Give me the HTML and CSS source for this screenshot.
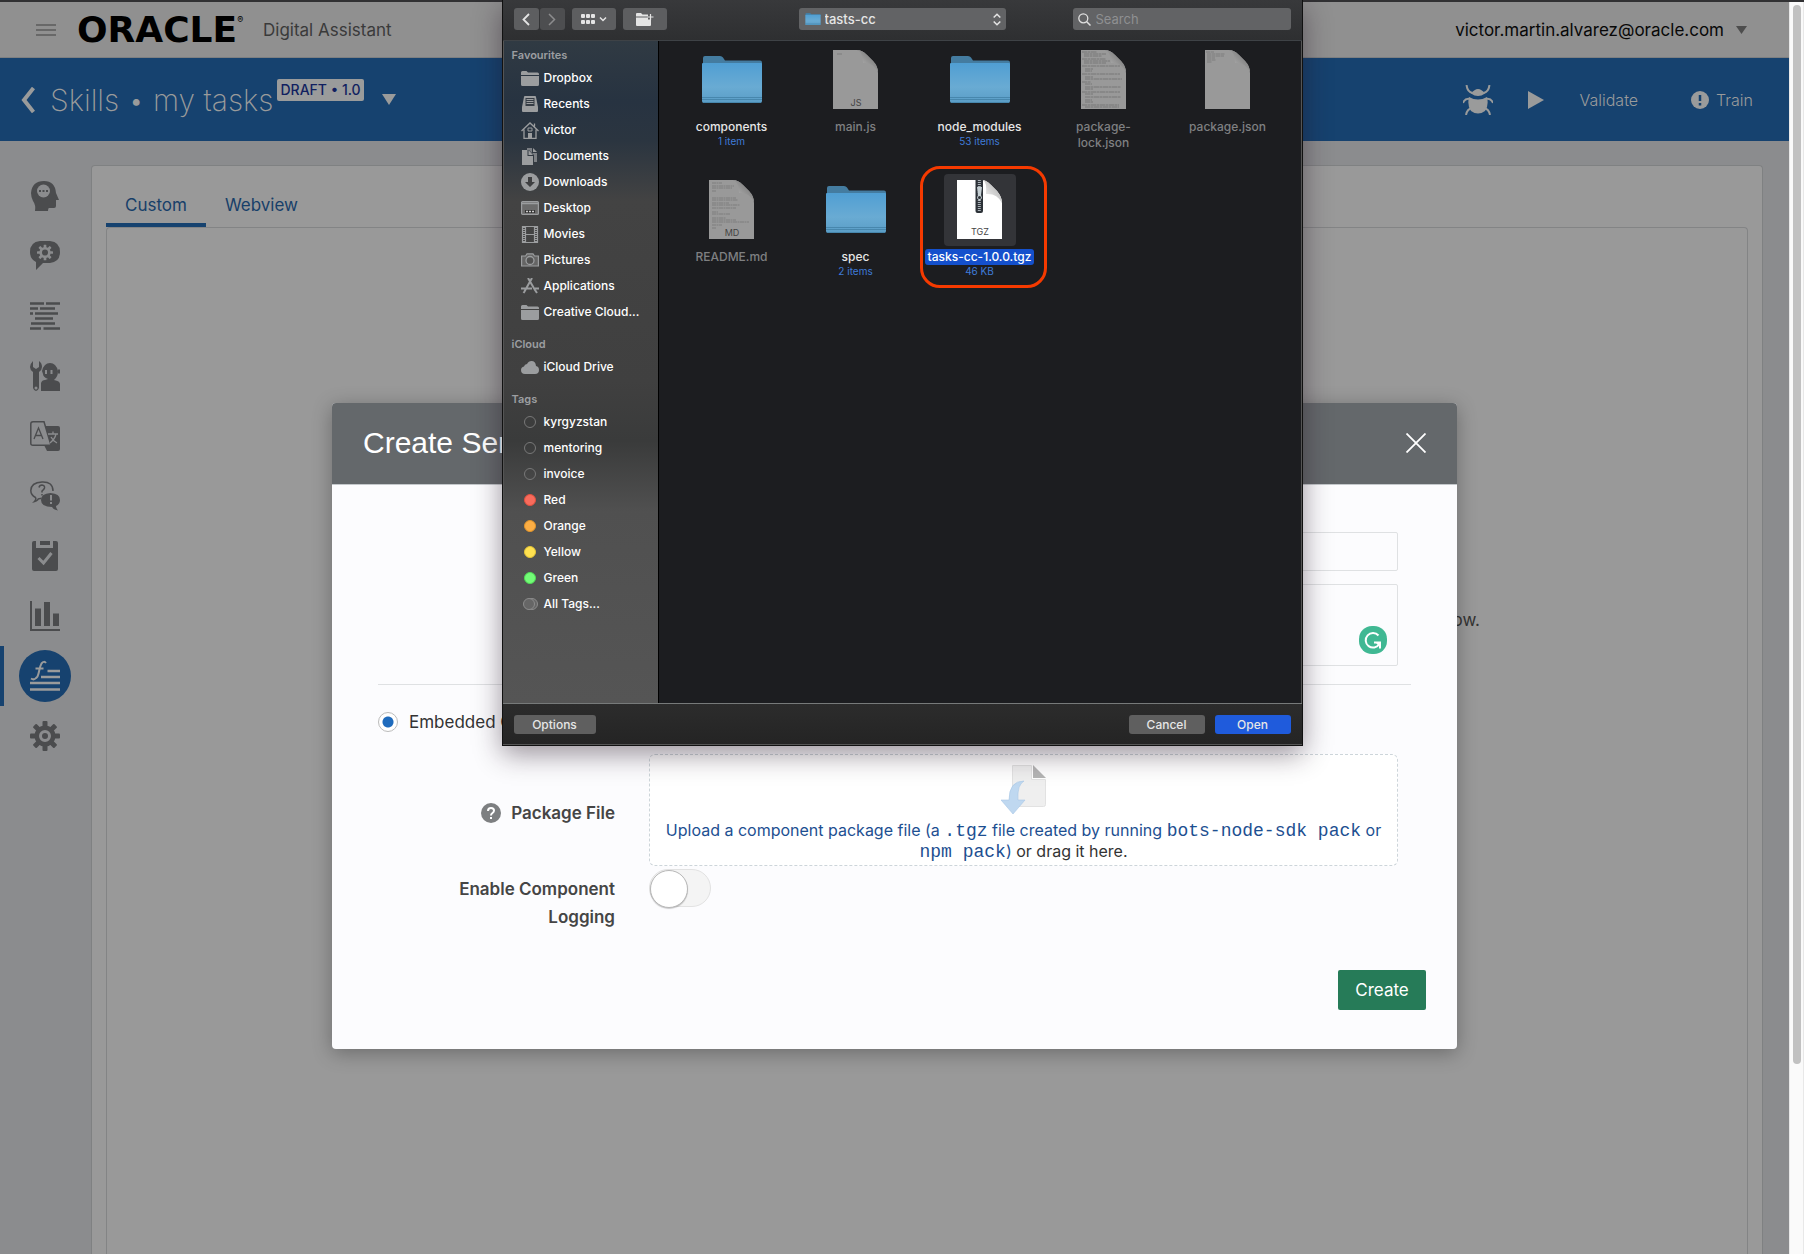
FILE: index.html
```html
<!DOCTYPE html>
<html lang="en">
<head>
<meta charset="utf-8">
<title>Oracle Digital Assistant</title>
<link rel="stylesheet" href="styles.css">
</head>
<body>
<svg class="sprite" aria-hidden="true">
  <defs>
    <linearGradient id="folder-fill" x1="0" y1="0" x2="0" y2="1">
      <stop offset="0" stop-color="#509fd3"/><stop offset="0.6" stop-color="#69abd3"/><stop offset="1" stop-color="#5a9dc6"/>
    </linearGradient>
    <linearGradient id="fold-fill" x1="0" y1="1" x2="1" y2="0">
      <stop offset="0" stop-color="#c2c2c2"/><stop offset="0.6" stop-color="#8b8b8b"/>
    </linearGradient>
    <linearGradient id="fold-white" x1="0" y1="1" x2="1" y2="0">
      <stop offset="0" stop-color="#fff"/><stop offset="0.6" stop-color="#c8c8c8"/>
    </linearGradient>
    <symbol id="folder" viewBox="0 0 60 47">
      <path d="M1 2q0-2 2-2h15q2 0 3 1.500l2 3h35q2 0 2 2V12H1z" fill="#447ca0"/>
      <path d="M0 8q0-1 1-1h58q1 0 1 1v37q0 2-2 2H2q-2 0-2-2z" fill="url(#folder-fill)"/>
      <path d="M0 41.500h60M0 43.500h60M1 46.500h58" stroke="#4787ad" stroke-width="1"/>
    </symbol>
    <symbol id="sheet" viewBox="0 0 45 59">
      <path d="M0 0h24q5 0 10 5l6 6q5 6 5 12v36H0z" fill="#999"/>
      <path d="M24 0q6 2 6 13q10-1 15 9q0-6-5-11l-6-6q-5-5-10-5z" fill="url(#fold-fill)"/>
    </symbol>
    <symbol id="mini-folder" viewBox="0 0 18 15">
      <path d="M0 1.500Q0 0 1.500 0h4L7 1.500h9.500Q18 1.500 18 3v1H0zM0 5h18v8.500q0 1.500-1.500 1.500h-15Q0 15 0 13.500z" fill="currentColor"/>
    </symbol>
    <symbol id="gear" viewBox="0 0 30 30">
      <g fill="currentColor">
        <g id="teeth"><rect x="12.500" y="0" width="5" height="30" rx="1"/><rect x="0" y="12.500" width="30" height="5" rx="1"/></g>
        <use href="#teeth" transform="rotate(45 15 15)"/>
        <circle cx="15" cy="15" r="10.500"/>
      </g>
    </symbol>
  </defs>
</svg>

<div class="page">
  <div class="app">
    <header class="topbar">
      <button class="menu-button" aria-label="Menu"><svg width="20" height="12" viewBox="0 0 20 12"><path d="M0 1h20M0 6h20M0 11h20" stroke="#5b5b5b" stroke-width="1.500"/></svg></button>
      <a class="brand" href="#"><span class="wordmark">ORACLE</span><sup>®</sup></a>
      <span class="product">Digital Assistant</span>
      <button class="account">victor.martin.alvarez@oracle.com<svg width="11" height="8" viewBox="0 0 11 8"><path d="M0 0h11L5.500 8z" fill="#4d4d4d"/></svg></button>
    </header>

    <div class="skillbar">
      <a class="back" href="#" aria-label="Back"><svg width="14" height="26" viewBox="0 0 14 26"><path d="M12.500 1L3 13l9.500 12" fill="none" stroke="#9a9b9b" stroke-width="4"/></svg></a>
      <h1>Skills • my tasks</h1>
      <span class="version">DRAFT • 1.0</span>
      <button class="version-menu" aria-label="Versions"><svg width="14" height="11" viewBox="0 0 14 11"><path d="M0 0h14L7 11z" fill="#9a9b9b"/></svg></button>
      <div class="skill-actions">
        <button aria-label="Debug"><svg width="30" height="30" viewBox="0 0 30 30" fill="none" stroke="#9a9b9b" stroke-width="2"><path d="M3.500 0q1 7 6 8M26.500 0q-1 7-6 8M0 18q2-5 7-4M30 18q-2-5-7-4M3 30q1-6 6-7M27 30q-1-6-6-7"/><path d="M8 8.500q7-9 14 0q-7 5-14 0zM6 12q9 5 18 0q2 9-2 14q-7 5-14 0q-4-5-2-14z" fill="#9a9b9b" stroke="none"/></svg></button>
        <button class="play" aria-label="Run"><svg width="16" height="18" viewBox="0 0 16 18"><path d="M0 0l16 9L0 18z" fill="#9a9b9b"/></svg></button>
        <button class="validate">Validate</button>
        <button class="train"><svg width="18" height="18" viewBox="0 0 18 18"><circle cx="9" cy="9" r="9" fill="#9a9b9b"/><path d="M9 4v6M9 12v2.500" stroke="#16426f" stroke-width="2.500"/></svg>Train</button>
      </div>
    </div>

    <div class="workspace">
      <nav class="rail">
        <a href="#" aria-label="Intents"><svg width="30" height="30" viewBox="0 0 30 30"><path d="M5 30q1-6-2-10Q1 16 1 12Q2 0 14 0q11 0 12 12l3 7h-3v6q0 2-2 2h-5q-1 0-1 3z" fill="#4b4c4e"/><circle cx="13.500" cy="10" r="6.500" fill="#8b8c8e"/><path d="M9 10h2M12.500 10h2M16 10h2" stroke="#4b4c4e" stroke-width="2"/></svg></a>
        <a href="#" aria-label="Q&amp;A"><svg width="30" height="30" viewBox="0 0 30 30"><path d="M10 0h10q10 1 10 11t-10 11h-7l-7 7v-8Q0 18 0 11Q0 1 10 0z" fill="#4b4c4e"/><g color="#8b8c8e"><use href="#gear" x="7" y="3.500" width="16" height="16"/></g><circle cx="15" cy="11.500" r="3" fill="#4b4c4e"/></svg></a>
        <a href="#" aria-label="Flows"><svg width="30" height="30" viewBox="0 0 30 30"><path d="M0 2.500h14M16 2.500h14M0 7.500h8M10 7.500h15M0 12.500h3M5 12.500h23M5 17.500h18M1 22.500h24M0 27.500h11M13.500 27.500H30" stroke="#4b4c4e" stroke-width="2.500"/></svg></a>
        <a href="#" aria-label="Tools"><svg width="30" height="30" viewBox="0 0 30 30"><path d="M3 0v6l3 2 3-2V0q3 2 3 6q0 3-3 5v16q-1 3-3 3t-3-3V11Q0 9 0 6t3-6z" fill="#4b4c4e"/><circle cx="6" cy="27" r="1.500" fill="#8b8c8e"/><path d="M11 30V22q1-3 4-3l3-1q-5-2-5-5l-1-3q2-8 8-8t8 8q0 6-4 9q6 1 6 4v7z" fill="#4b4c4e"/><path d="M16 9v4M21.500 9v4" stroke="#8b8c8e" stroke-width="2"/><path d="M29 8.500v4" stroke="#4b4c4e" stroke-width="2"/></svg></a>
        <a href="#" aria-label="Translate"><svg width="30" height="30" viewBox="0 0 30 30"><path d="M14 5h14q2 0 2 2v21q0 2-2 2H17l-3-6z" fill="#4b4c4e"/><path d="M3 .8h11L21 24.200H3q-2.200 0-2.200-2V3Q.8.800 3 .8z" fill="#8b8c8e" stroke="#4b4c4e" stroke-width="1.500"/><path d="M4 18L8.500 7 13 18M5.500 14.500h6" fill="none" stroke="#4b4c4e" stroke-width="1.300"/><path d="M18 13h10M23 10.500v2.500M26 13q-1 5-6 9M21 16q2 4 6 6" fill="none" stroke="#8b8c8e" stroke-width="1.300"/></svg></a>
        <a href="#" aria-label="Feedback"><svg width="30" height="30" viewBox="0 0 30 30"><path d="M11.500 17.500Q8 17 7.500 19q-1 1-3 1.500 2-2 1-4Q.8 14 .8 9.500Q1 1.500 12 1t11 9" fill="none" stroke="#4b4c4e" stroke-width="1.500"/><path d="M20.500 12Q30 12.500 30 19q0 4-4 6 0 2 2 4.500-5-1-6-3.500Q11 26 11 19q0-6.500 9.500-7z" fill="#4b4c4e"/><path d="M9 6.500Q9.500 4 12 4q3 .5 2.500 3-.5 1.500-2.500 3v1.500M12 13v1.500" fill="none" stroke="#4b4c4e" stroke-width="1.500"/><path d="M21 14v5.500M21 21v2" stroke="#8b8c8e" stroke-width="2"/></svg></a>
        <a href="#" aria-label="Test"><svg width="30" height="30" viewBox="0 0 30 30"><path d="M4 0h2v7h17V0h3q2 0 2 2v26q0 2-2 2H4q-2 0-2-2V2q0-2 2-2z" fill="#4b4c4e"/><path d="M10 0h10v4H10z" fill="#4b4c4e"/><path d="M8.500 17l5 5 8-10" fill="none" stroke="#8b8c8e" stroke-width="3"/></svg></a>
        <a href="#" aria-label="Insights"><svg width="30" height="30" viewBox="0 0 30 30"><path d="M1 0v29h29" fill="none" stroke="#4b4c4e" stroke-width="2"/><path d="M5 7.500h6V25H5zM14 1h6v24h-6zM23 12.500h6V25h-6z" fill="#4b4c4e"/></svg></a>
        <a href="#" class="active" aria-label="Components"><svg width="52" height="52" viewBox="0 0 52 52"><circle cx="26" cy="26" r="26" fill="#16426f"/><path d="M28.500 21H41M22 27h19M11 33h30M11 39.500h30" stroke="#9a9b9b" stroke-width="2.500"/><path d="M27 13q-2-2.500-4.500.5Q21 16 20 21.500T17 28q-2 2.500-5 .5M16.500 18.500h8" fill="none" stroke="#9a9b9b" stroke-width="2"/></svg></a>
        <a href="#" aria-label="Settings"><svg width="30" height="30" viewBox="0 0 30 30"><g color="#4b4c4e"><use href="#gear" width="30" height="30"/></g><circle cx="15" cy="15" r="4.500" fill="none" stroke="#8b8c8e" stroke-width="3"/></svg></a>
      </nav>
      <main class="card">
        <div class="tabs">
          <a class="tab selected" href="#">Custom</a>
          <a class="tab" href="#">Webview</a>
        </div>
        <div class="panel"><p>To create a service, use the button below.</p></div>
      </main>
    </div>
  </div>
  <div class="scrollbar"><div class="thumb"></div></div>

  <section class="modal" aria-label="Create Service">
    <header class="modal-head">
      <h2>Create Service</h2>
      <button class="close" aria-label="Close"><svg width="20" height="20" viewBox="0 0 20 20"><path d="M.5.500l19 19M19.500.500l-19 19" stroke="#fff" stroke-width="1.800"/></svg></button>
    </header>
    <form class="modal-body">
      <div class="row"><input class="field" type="text" aria-label="Name"></div>
      <div class="row area">
        <textarea class="field tall" aria-label="Description"></textarea>
        <svg class="checker" width="28" height="28" viewBox="0 0 28 28"><rect width="28" height="28" rx="13" fill="#40b893"/><path d="M19.500 9.500a7.300 7.300 0 1 0 .8 8.500" fill="none" stroke="#fff" stroke-width="2"/><path d="M15 16.500h6v6" fill="none" stroke="#fff" stroke-width="2"/><path d="M17 17h4v4z" fill="#fff"/></svg>
      </div>
      <hr>
      <label class="choice"><input type="radio" name="kind" checked>Embedded Container</label>
      <div class="row">
        <label class="caption" for="package"><svg width="20" height="20" viewBox="0 0 20 20"><circle cx="10" cy="10" r="10" fill="#7d7f81"/><path d="M7 8q0-3 3-3t3 2.500q0 1.500-1.500 2.500T10 12.500M10 14v2" fill="none" stroke="#fff" stroke-width="2"/></svg>Package File</label>
        <div class="dropzone" id="package">
          <svg width="46" height="49" viewBox="0 0 46 49"><path d="M11.500.500h19v14h14v25q0 2-2 2h-29q-2 0-2-2z" fill="#efefef" stroke="#e2e2e2"/><path d="M32 0l13 13H32z" fill="#b5b5b5"/><path d="M23 16Q8 16 8 35H0l12 14 12-14h-7Q16 20 23 16z" fill="#bfd8f0" stroke="#a9c8e6" stroke-width=".6"/></svg>
          <p><a href="#">Upload a component package file (a <code>.tgz</code> file created by running <code>bots-node-sdk pack</code> or <code>npm pack</code>)</a> or drag it here.</p>
        </div>
      </div>
      <div class="row logging">
        <label class="caption" for="logging">Enable Component Logging</label>
        <input class="toggle" id="logging" type="checkbox">
      </div>
      <div class="submit"><button type="button">Create</button></div>
    </form>
  </section>

  <section class="finder" aria-label="Open file">
    <header class="toolbar">
      <div class="history">
        <button aria-label="Back"><svg width="8" height="13" viewBox="0 0 8 13"><path d="M7 1L1.500 6.500 7 12" fill="none" stroke="#e4e4e4" stroke-width="1.800"/></svg></button>
        <button aria-label="Forward"><svg width="8" height="13" viewBox="0 0 8 13"><path d="M1 1l5.500 5.500L1 12" fill="none" stroke="#8c8c8d" stroke-width="1.500"/></svg></button>
      </div>
      <button class="wide" aria-label="View"><svg width="26" height="11" viewBox="0 0 26 11"><g fill="#e4e4e4"><rect width="4" height="4" rx="1"/><rect x="5" width="4" height="4" rx="1"/><rect x="10" width="4" height="4" rx="1"/><rect y="6" width="4" height="4" rx="1"/><rect x="5" y="6" width="4" height="4" rx="1"/><rect x="10" y="6" width="4" height="4" rx="1"/></g><path d="M19 3.500L22 6.500 25 3.500" fill="none" stroke="#e4e4e4" stroke-width="1.500"/></svg></button>
      <button class="wide" aria-label="New folder"><svg width="18" height="13" viewBox="0 0 18 13"><path d="M0 1q0-1 1-1h4l1.500 1.500H12v2H0zM0 4.500h12v2h3V12q0 1-1 1H1q-1 0-1-1z" fill="#e4e4e4"/><path d="M14.500 1v6M11.500 4h6" stroke="#e4e4e4" stroke-width="1.200"/></svg></button>
      <div class="location">
        <svg class="location-folder" width="16" height="12"><use href="#folder" width="16" height="12"/></svg>
        <select aria-label="Folder"><option>tasts-cc</option></select>
        <svg class="stepper" width="8" height="13" viewBox="0 0 8 13"><path d="M.7 4.500L4 1.200l3.300 3.300M.7 8.500L4 11.800l3.300-3.300" fill="none" stroke="#e4e4e4" stroke-width="1.500"/></svg>
      </div>
      <div class="search">
        <svg width="13" height="13" viewBox="0 0 13 13"><circle cx="5.300" cy="5.300" r="4.500" fill="none" stroke="#e0e0e0" stroke-width="1.300"/><path d="M8.500 8.500l4 4" stroke="#e0e0e0" stroke-width="1.500"/></svg>
        <input type="search" placeholder="Search" aria-label="Search">
      </div>
    </header>

    <div class="browser">
      <nav class="places">
        <h3>Favourites</h3>
        <a href="#"><svg width="18" height="15"><use href="#mini-folder"/></svg>Dropbox</a>
        <a href="#"><svg width="18" height="16" viewBox="0 0 18 16"><path d="M3 1q0-1 1-1h10q1 0 1 1l2 10v4q0 1-1 1H2q-1 0-1-1v-4z" fill="currentColor"/><path d="M4.500 2h9v8h-9z" fill="#353c45"/><path d="M5.500 3.500h7M5.500 5.500h7M5.500 7.500h7M2.500 11.500h3l1 2h5l1-2h3" fill="none" stroke="currentColor"/></svg>Recents</a>
        <a href="#"><svg width="18" height="17" viewBox="0 0 18 17"><path d="M.5 9L9 1l8.500 8M3 7.500v9h12v-9M13.500 1.500v3" fill="none" stroke="currentColor" stroke-width="1.300"/><path d="M7 6h4v3H7z" fill="none" stroke="currentColor"/><path d="M7 11h4v5H7z" fill="currentColor"/></svg>victor</a>
        <a href="#"><svg width="18" height="17" viewBox="0 0 18 17"><path d="M6 0h5v5h5v9h-3V7L8 2H6z" fill="currentColor" opacity=".7"/><path d="M1 2h5.500v6H12v9H1zM7.500 2L12 7H7.500zM12 0l4 4h-4z" fill="currentColor"/></svg>Documents</a>
        <a href="#"><svg width="18" height="18" viewBox="0 0 18 18"><circle cx="9" cy="9" r="9" fill="currentColor"/><path d="M7 4h4v5h3l-5 5-5-5h3z" fill="#3e3f41"/></svg>Downloads</a>
        <a href="#"><svg width="18" height="14" viewBox="0 0 18 14"><rect x=".6" y=".6" width="16.800" height="12.800" rx="1" fill="#6b6b6b" stroke="currentColor" stroke-width="1.200"/><path d="M1 2.500h16" stroke="currentColor" stroke-width="1.500"/><path d="M4 9h10v3H4z" fill="#333"/><path d="M5 10.500h2M8 10.500h2M11 10.500h2" stroke="#ccc" stroke-width="1.500"/></svg>Desktop</a>
        <a href="#"><svg width="18" height="17" viewBox="0 0 18 17"><path d="M1.500.500h15v16h-15zM4.500 0v17M13.500 0v17M4.500 8.500h9" fill="none" stroke="currentColor" stroke-width="1.200"/><path d="M3 1v15M15 1v15" stroke="currentColor" stroke-width="2" stroke-dasharray="1 1"/></svg>Movies</a>
        <a href="#"><svg width="18" height="14" viewBox="0 0 18 14"><path d="M.6 3h4L6 .8h6L13.500 3h3.900v10H.6z" fill="#656565" stroke="currentColor" stroke-width="1.200"/><circle cx="9" cy="7.500" r="4" fill="#525252" stroke="currentColor" stroke-width="1.300"/></svg>Pictures</a>
        <a href="#"><svg width="18" height="16" viewBox="0 0 18 16"><path d="M7 0l7 12 2 3M11 0L3.500 13.500 2.500 15M0 10.500h11M14 10.500h4" fill="none" stroke="currentColor" stroke-width="2"/></svg>Applications</a>
        <a href="#"><svg width="18" height="15"><use href="#mini-folder"/></svg>Creative Cloud...</a>
        <h3>iCloud</h3>
        <a href="#"><svg width="18" height="13" viewBox="0 0 18 13"><path d="M4 13q-4 0-4-4 0-3 3-3.500Q3.500 3 6 3q1.500-3 4.500-3 4 0 4.500 5 3 .5 3 4 0 4-4 4z" fill="currentColor"/></svg>iCloud Drive</a>
        <h3>Tags</h3>
        <a href="#"><i class="dot"></i>kyrgyzstan</a>
        <a href="#"><i class="dot"></i>mentoring</a>
        <a href="#"><i class="dot"></i>invoice</a>
        <a href="#"><i class="dot red"></i>Red</a>
        <a href="#"><i class="dot orange"></i>Orange</a>
        <a href="#"><i class="dot yellow"></i>Yellow</a>
        <a href="#"><i class="dot green"></i>Green</a>
        <a href="#"><svg width="18" height="14" viewBox="0 0 18 14"><circle cx="11" cy="7" r="5.500" fill="#666" stroke="#8c8c8c"/><circle cx="8" cy="7" r="5.500" fill="#666" stroke="#8c8c8c"/></svg>All Tags...</a>
      </nav>

      <ul class="files">
        <li><span class="thumbnail"><svg width="60" height="47"><use href="#folder"/></svg></span><b>components</b><small>1 item</small></li>
        <li class="dim"><span class="thumbnail"><svg width="45" height="59" viewBox="0 0 45 59"><use href="#sheet"/><path d="M4 4h5" stroke="#777" stroke-width=".8"/><text x="23" y="56" text-anchor="middle" class="kind">JS</text></svg></span><b>main.js</b></li>
        <li><span class="thumbnail"><svg width="60" height="47"><use href="#folder"/></svg></span><b>node_modules</b><small>53 items</small></li>
        <li class="dim"><span class="thumbnail"><svg width="45" height="59" viewBox="0 0 45 59"><use href="#sheet"/><path d="M1 2h15M3 4h22M3 6h18M1 9h24M3 11h26M3 13h22M1 16h38M4 19h8M4 21h7M1 24h38M4 27h8M4 29h37M1 32h9M4 34h7M4 37h36M4 39h8M1 42h38M4 44h8M4 47h36M4 50h7M4 52h8M1 55h37M4 57h34" stroke="#6f6f6f" stroke-width=".8" stroke-dasharray="5 .5 3 .5"/></svg></span><b>package-lock.json</b></li>
        <li class="dim"><span class="thumbnail"><svg width="45" height="59" viewBox="0 0 45 59"><use href="#sheet"/><path d="M1 2h8M2 4h18M2 6h17M2 8h8M2 10h9M2 12h5" stroke="#777" stroke-width=".8" stroke-dasharray="4 .5"/></svg></span><b>package.json</b></li>
        <li class="dim"><span class="thumbnail"><svg width="45" height="59" viewBox="0 0 45 59"><use href="#sheet"/><path d="M3 3h10M3 6h22M3 8h20M3 11h4M3 18h24M3 20h26M3 23h17M3 25h28M3 28h24M3 32h6M3 34h18M3 38h14M3 40h24M3 42h37M3 45h10M3 48h4" stroke="#777" stroke-width=".8" stroke-dasharray="4 .5 2 .5"/><text x="23" y="56" text-anchor="middle" class="kind">MD</text></svg></span><b>README.md</b></li>
        <li><span class="thumbnail"><svg width="60" height="47"><use href="#folder"/></svg></span><b>spec</b><small>2 items</small></li>
        <li class="chosen"><span class="thumbnail"><svg width="45" height="59" viewBox="0 0 45 59"><path d="M0 0h24q5 0 10 5l6 6q5 6 5 12v36H0z" fill="#fff"/><path d="M26 0q4 2 3 14q11-1 16 9q0-6-5-12l-6-6q-5-5-8-5z" fill="url(#fold-white)"/><path d="M18.500 0h7.500v31q0 2-2 2h-3.500q-2 0-2-2z" fill="#2d3238"/><path d="M22.300 0v31" stroke="#aab2b8" stroke-width="3" stroke-dasharray="1 1"/><path d="M20 7h5l-1 8 1 3-2.500 3-2.500-3 1-3z" fill="#c6d0d4"/><circle cx="22.500" cy="17.500" r="1.500" fill="#2d3238"/><text x="23" y="55" text-anchor="middle" class="kind">TGZ</text></svg></span><b>tasks-cc-1.0.0.tgz</b><small>46 KB</small></li>
      </ul>
    </div>

    <footer class="commands">
      <button class="options">Options</button>
      <button>Cancel</button>
      <button class="primary">Open</button>
    </footer>
  </section>
</div>
</body>
</html>
```
FILE: styles.css
```css
* { box-sizing: border-box; }

body {
  margin: 0;
  background: #8b8c8e;
  color: #333;
  font: 17px/24px Inter, "Liberation Sans", sans-serif;
}

button, input, textarea, select { font: inherit; color: inherit; }

button {
  display: inline-flex;
  align-items: center;
  justify-content: center;
  margin: 0;
  padding: 0;
  border: 0;
  background: none;
}

a { color: inherit; text-decoration: none; }
h1, h2, h3, p, ul { margin: 0; padding: 0; }
svg { display: block; flex: none; }
.sprite { position: absolute; width: 0; height: 0; }

/* Page frame */
.page {
  position: relative;
  display: grid;
  grid-template-columns: 1fr 15px;
  min-height: 100vh;
  border-top: 2px solid #313133;
}

.app { display: flex; flex-direction: column; }

.scrollbar {
  padding: 3px 2px 0 3px;
  background: #fafafa;
  border: solid #e8e8e8;
  border-width: 0 1px;
}

.thumb { width: 8px; height: 1059px; border-radius: 4px; background: #c1c1c1; }

.topbar {
  display: flex;
  align-items: center;
  height: 56px;
  padding: 0 42px 0 36px;
  background: #909090;
  border-bottom: 1px solid #7d7f81;
}

.brand { display: flex; width: 186px; margin-left: 21px; color: #000; }
.wordmark { font: bold 36px/36px "DejaVu Sans", sans-serif; }
.brand sup { font-size: 9px; line-height: 16px; }
.product { color: #3a3a3a; }
.account { gap: 12px; margin-left: auto; color: #080808; }

.skillbar {
  display: flex;
  align-items: center;
  height: 83px;
  padding: 0 36px 0 21px;
  background: #16426f;
  color: #9a9b9b;
}

.skillbar h1 { margin-left: 15px; font-size: 30px; line-height: 40px; font-weight: 200; }

.version {
  align-self: flex-start;
  margin: 21px 0 0 4px;
  padding: 0 3px;
  border-radius: 2px;
  background: #9a9b9b;
  color: #111f60;
  font-size: 14px;
  line-height: 22px;
  font-weight: 500;
}

.version-menu { margin-left: 18px; }
.skill-actions { display: flex; align-items: center; margin-left: auto; font-size: 16px; font-weight: 300; }
.play { margin-left: 35px; }
.validate { margin-left: 35px; }
.train { gap: 7px; margin-left: 53px; }

.workspace { display: flex; flex: 1; padding: 24px 26px 0 0; }

.rail { display: flex; flex-direction: column; width: 91px; padding: 1px 1px 0 0; }
.rail a { display: grid; place-items: center; height: 60px; }
.rail .active { box-shadow: inset 4px 0 #16426f; }

.card {
  display: flex;
  flex: 1;
  flex-direction: column;
  padding: 23px 14px 0;
  border: 1px solid #7f8182;
  border-bottom: 0;
  border-radius: 4px 4px 0 0;
  background: #999;
}

.tabs { display: flex; color: #173f69; }
.tab { height: 38px; padding: 4px 19px 0; }
.selected { border-bottom: 4px solid #16426f; }

.panel {
  flex: 1;
  padding: 380px 267px 0 0;
  border: 1px solid #838485;
  border-bottom: 0;
  border-radius: 4px 4px 0 0;
  text-align: right;
}

/* Create Service dialog */
.modal {
  position: absolute;
  top: 401px;
  left: 0;
  right: 15px;
  width: 1125px;
  margin: 0 auto;
  border-radius: 4px;
  background: #fcfcfe;
  box-shadow: 0 4px 20px rgba(0, 0, 0, .3);
}

.modal-head {
  display: flex;
  align-items: center;
  justify-content: space-between;
  height: 82px;
  padding: 0 31px 2px;
  border-bottom: 1px solid #c4c8cb;
  border-radius: 4px 4px 0 0;
  background: #64686b;
  color: #fff;
}

.modal-head h2 { font: 30px/36px "Liberation Sans", sans-serif; }

.modal-body { padding: 47px 46px 39px; }

.row {
  position: relative;
  display: grid;
  grid-template-columns: 237px 1fr;
  column-gap: 34px;
  padding-right: 13px;
}

.field {
  grid-column: 2;
  display: block;
  width: 100%;
  height: 39px;
  border: 1px solid #dfe1e3;
  border-radius: 2px;
  background: #fcfcfe;
  resize: none;
}

.tall { height: 82px; }
.area { margin-top: 13px; }
.checker { position: absolute; right: 24px; bottom: 12px; }

hr { margin: 18px 0 26px; border: 0; border-top: 1px solid #dfe1e3; }

.choice { display: flex; align-items: center; gap: 11px; height: 21px; margin-bottom: 22px; }

.choice input {
  appearance: none;
  width: 20px;
  height: 20px;
  margin: 0;
  border: 1px solid #bbb;
  border-radius: 50%;
  background: radial-gradient(circle, #1f6bbd 5px, #fff 6px);
}

.caption {
  display: flex;
  align-items: center;
  justify-content: flex-end;
  gap: 10px;
  padding: 6px 0 0 70px;
  color: #454545;
  font-weight: 600;
  line-height: 28px;
  text-align: right;
}

.dropzone {
  display: flex;
  flex-direction: column;
  align-items: center;
  height: 112px;
  padding-top: 10px;
  border: 1px dashed #cdd5da;
  border-radius: 6px;
  background: #fff;
}

.dropzone p { padding: 6px 8px 0; line-height: 21px; text-align: center; font-size: 16px; }
.dropzone a { color: #1d4f91; }
code { font: 18px/20px "Liberation Mono", monospace; }

.logging { margin-top: 3px; }

.toggle {
  appearance: none;
  width: 62px;
  height: 38px;
  margin: 0;
  border: 1px solid #e2e2e2;
  border-radius: 19px;
  background: #f4f4f4;
}

.toggle::before {
  content: "";
  display: block;
  width: 36px;
  height: 36px;
  border: 1px solid #b8b8b8;
  border-radius: 50%;
  background: #fff;
  box-shadow: 0 1px 1px rgba(0, 0, 0, .2);
}

.submit { display: flex; justify-content: flex-end; margin: 39px -15px 0 0; }
.submit button { width: 88px; height: 40px; border-radius: 2px; background: #267b58; color: #fff; }

/* File chooser */
.finder {
  position: absolute;
  top: -2px;
  left: 0;
  right: 0;
  width: 801px;
  margin: 0 auto;
  border: 1px solid #111;
  border-top: 0;
  box-shadow: inset 0 0 0 1px #555, 0 8px 26px rgba(30, 15, 30, .45);
  color: #e6e6e6;
  font-size: 13px;
  line-height: 18px;
  font-weight: 500;
}

.toolbar {
  display: flex;
  align-items: center;
  height: 41px;
  padding: 0 11px 2px;
  border-bottom: 1px solid #3e4246;
  background: linear-gradient(#38393b, #2e2f31);
}

.toolbar button { width: 25px; height: 22px; border-radius: 3px; background: #5d5e60; }
.history { display: flex; gap: 1px; }
.history button + button { background: #4d4e50; }
.toolbar .wide { width: 44px; margin-left: 7px; }

.location { position: relative; width: 207px; margin: 0 67px 0 auto; }

.location select {
  appearance: none;
  display: block;
  width: 100%;
  height: 22px;
  padding: 0 20px 0 26px;
  border: 0;
  border-radius: 3px;
  background: #626365;
}

.location-folder { position: absolute; top: 5px; left: 6px; }
.stepper { position: absolute; top: 5px; right: 5px; }

.search {
  display: flex;
  align-items: center;
  gap: 5px;
  width: 218px;
  height: 22px;
  padding: 0 5px;
  border-radius: 3px;
  background: #626365;
}

.search input { width: 100%; padding: 0; border: 0; background: none; font-weight: 400; }
.search input::placeholder { color: #8f9092; }

.browser { display: grid; grid-template-columns: 155px 1fr; height: 662px; margin: 0 1px; }

.places {
  padding: 5px 8px;
  border-right: 1px solid #000;
  background: linear-gradient(#303a43 0, #273341 60px, #2b3540 100px, #434343 160px, #404040 340px, #3a3b3b 400px, #505050 470px, #555 100%);
  color: #fff;
}

.places h3 { color: #9c9ea1; font-size: 11px; line-height: 19px; font-weight: 600; }
.places a + h3 { margin-top: 10px; }
.places a { display: flex; align-items: center; gap: 5px; height: 26px; padding-left: 9px; white-space: nowrap; font-size: 12px; }
.places svg { color: #9b9d9f; }

.dot { width: 12px; height: 12px; margin: 0 3px; border: 1px solid #787878; border-radius: 50%; }
.red { border-color: #e2503f; background: #f86b5c; }
.orange { border-color: #e0942a; background: #fcae44; }
.yellow { border-color: #e3c437; background: #ffe150; }
.green { border-color: #4fdb55; background: #73fb77; }

.files {
  display: grid;
  grid-template-columns: repeat(5, 124px);
  grid-auto-rows: 130px;
  align-content: start;
  padding: 3px 0 0 11px;
  background: #1c1d20;
  list-style: none;
}

.files li { position: relative; display: flex; flex-direction: column; align-items: center; text-align: center; }
.thumbnail { display: grid; place-items: center; width: 72px; height: 72px; padding-bottom: 2px; border-radius: 4px; }
.files b { max-width: 110px; padding: 0 3px; margin-top: 3px; border-radius: 3px; font-size: 12px; line-height: 16px; font-weight: 500; }
.files small { color: #3f7bd8; font-size: 10px; line-height: 12px; font-weight: 400; }
.files .dim b { max-width: 90px; color: #7f8082; }
.kind { fill: #444; font-size: 9px; font-weight: 400; }

.chosen .thumbnail { background: #333438; }
.chosen b { background: #1450cc; color: #fff; }

.chosen::after {
  content: "";
  position: absolute;
  inset: -8px -5px 16px 2px;
  border: 3px solid #f53a00;
  border-radius: 20px;
}

.commands {
  display: flex;
  align-items: center;
  gap: 10px;
  height: 42px;
  padding: 0 11px;
  border-top: 1px solid #777a7a;
  background: linear-gradient(#2c2c2c, #242424);
  box-shadow: inset 0 -1px #555;
}

.commands button { width: 76px; height: 19px; border-radius: 3px; background: #5f5f5f; font-size: 12px; }
.commands .options { width: 82px; margin-right: auto; }
.commands .primary { background: #1f5bdc; }
```
